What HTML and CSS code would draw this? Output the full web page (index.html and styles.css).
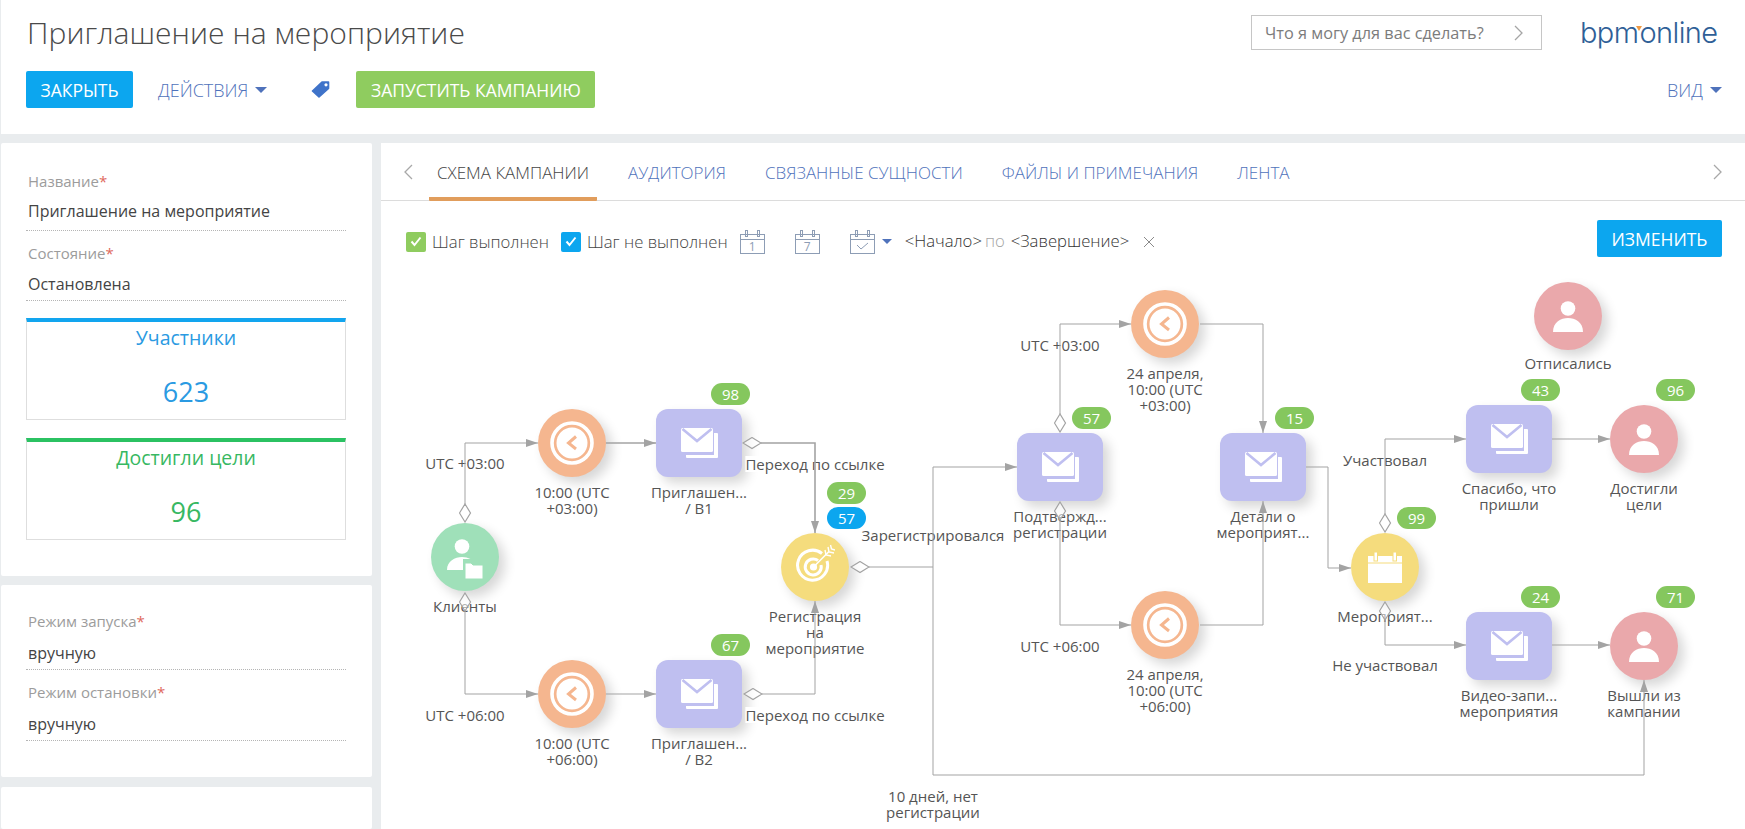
FILE: index.html
```html
<!DOCTYPE html>
<html lang="ru">
<head>
<meta charset="utf-8">
<title>Приглашение на мероприятие</title>
<link rel="stylesheet" href="styles.css">
</head>
<body>
<svg class="defs" width="0" height="0" aria-hidden="true">
  <defs>
    <symbol id="i-clock" viewBox="0 0 44 44">
      <circle cx="22" cy="22" r="20" fill="none" stroke="#fff" stroke-width="3.6"/>
      <circle cx="22" cy="22" r="15.5" fill="#fff"/>
      <path d="M26 15.5 L18.5 22 L26 28" fill="none" stroke="#f5b68f" stroke-width="3"/>
    </symbol>
    <symbol id="i-mail" viewBox="0 0 37 30">
      <path d="M33 5h3a1 1 0 0 1 1 1v23a1 1 0 0 1-1 1H6a1 1 0 0 1-1-1v-2h28z" fill="#fff"/>
      <rect width="32" height="24" rx="1.5" fill="#fff"/>
      <path d="M1.5 1 L16 13 L30.500 1" fill="none" stroke="#bfbff0" stroke-width="2.6"/>
    </symbol>
    <symbol id="i-person" viewBox="0 0 30 31">
      <circle cx="15" cy="7.500" r="7.300"/>
      <path d="M0 31C0 21 8 17 15 17s15 4 15 14z"/>
    </symbol>
    <symbol id="i-clients" viewBox="0 0 36 40">
      <circle cx="15" cy="7.500" r="7.300"/>
      <path d="M0 31C0 22 8 18 15 18c3 0 6 .7 8.500 2H16v11z"/>
      <path d="M18 24h6l2 2h10v14H18z" stroke="#9fe0b9" stroke-width="1"/>
    </symbol>
    <symbol id="i-target" viewBox="0 0 40 40">
      <g fill="none" stroke="#fff" stroke-width="3">
        <path d="M27 9.500A15 15 0 1 0 32 17"/>
        <path d="M23 16.500A8 8 0 1 0 26 21"/>
      </g>
      <circle cx="18.500" cy="23" r="3.600" fill="#fff"/>
      <path d="M18.500 23 L34 7.500" stroke="#fff" stroke-width="1.600"/>
      <path d="M30 6l1 5 5 1M33 3l1 5 5 1M35.500 1l1 4 3.500 1" fill="none" stroke="#fff" stroke-width="1.400"/>
    </symbol>
    <symbol id="i-event" viewBox="0 0 34 31">
      <rect x="0" y="4" width="34" height="27" fill="#fff"/>
      <path d="M0 11h34" stroke="#f5dc7d" stroke-width="1.200"/>
      <rect x="6" y="0" width="3.500" height="9" fill="#fff" stroke="#f5dc7d" stroke-width="1"/>
      <rect x="25" y="0" width="3.500" height="9" fill="#fff" stroke="#f5dc7d" stroke-width="1"/>
    </symbol>
    <symbol id="i-cal" viewBox="0 0 25 24">
      <g fill="none" stroke="#8d9db5" stroke-width="1">
        <rect x=".5" y="4.500" width="24" height="19"/>
        <path d="M.5 9.500h24"/>
        <rect x="5.500" y=".5" width="2" height="6"/>
        <rect x="17.500" y=".5" width="2" height="6"/>
      </g>
    </symbol>
    <marker id="arrow" markerUnits="userSpaceOnUse" markerWidth="13" markerHeight="9" refX="12" refY="4.500" orient="auto">
      <path d="M0 .5L12 4.500L0 8.500z" fill="#a3a3a3"/>
    </marker>
    <marker id="diamond" markerUnits="userSpaceOnUse" markerWidth="20" markerHeight="13" refX="19" refY="6.500" orient="auto">
      <path d="M1 6.500L10 1L19 6.500L10 12z" fill="#fff" fill-opacity=".55" stroke="#a3a3a3" stroke-width="1.200"/>
    </marker>
  </defs>
</svg>

<div class="app">
  <header class="header">
    <div class="header-top">
      <h1 class="title">Приглашение на мероприятие</h1>
      <div class="search">
        <span class="search-text">Что я могу для вас сделать?</span>
        <svg class="chev" width="9" height="16" viewBox="0 0 9 16"><path d="M1 1l7 7-7 7"/></svg>
      </div>
      <div class="logo">bpm<span class="logo-mark"></span>online</div>
    </div>
    <div class="toolbar">
      <button class="btn btn-blue btn-close">ЗАКРЫТЬ</button>
      <span class="link link-actions">ДЕЙСТВИЯ<i class="caret"></i></span>
      <svg class="tag" width="19" height="17" viewBox="0 0 19 17">
        <path d="M11 1h6.500v6.500L8 16 1.500 10z" fill="#3f73c9" stroke="#3f73c9" stroke-width="1.600" stroke-linejoin="round"/>
        <circle cx="15" cy="3.800" r="1.600" fill="#fff"/>
      </svg>
      <button class="btn btn-green">ЗАПУСТИТЬ КАМПАНИЮ</button>
      <span class="link link-view">ВИД<i class="caret"></i></span>
    </div>
  </header>

  <main class="main">
    <aside class="side">
      <section class="panel panel-primary">
        <div class="field field-tall">
          <div class="field-label">Название<b>*</b></div>
          <div class="field-value">Приглашение на мероприятие</div>
        </div>
        <div class="field field-state">
          <div class="field-label">Состояние<b>*</b></div>
          <div class="field-value">Остановлена</div>
        </div>
        <div class="metric metric-blue">
          <div class="metric-title">Участники</div>
          <div class="metric-value">623</div>
        </div>
        <div class="metric metric-green">
          <div class="metric-title">Достигли цели</div>
          <div class="metric-value">96</div>
        </div>
      </section>
      <section class="panel panel-modes">
        <div class="field">
          <div class="field-label">Режим запуска<b>*</b></div>
          <div class="field-value">вручную</div>
        </div>
        <div class="field">
          <div class="field-label">Режим остановки<b>*</b></div>
          <div class="field-value">вручную</div>
        </div>
      </section>
      <section class="panel panel-rest"></section>
    </aside>

    <section class="content">
      <nav class="tabs">
        <svg class="tab-chev" width="9" height="16" viewBox="0 0 9 16"><path d="M8 1L1 8l7 7"/></svg>
        <span class="tab tab-active">СХЕМА КАМПАНИИ</span>
        <span class="tab">АУДИТОРИЯ</span>
        <span class="tab">СВЯЗАННЫЕ СУЩНОСТИ</span>
        <span class="tab">ФАЙЛЫ И ПРИМЕЧАНИЯ</span>
        <span class="tab">ЛЕНТА</span>
        <svg class="tab-chev tab-chev-right" width="9" height="16" viewBox="0 0 9 16"><path d="M1 1l7 7-7 7"/></svg>
      </nav>

      <div class="filterbar">
        <div class="filters">
          <span class="check check-green"><svg width="12" height="11" viewBox="0 0 12 11"><path d="M1.500 5.500L4.500 9 10.500 1.500"/></svg></span>
          <span class="check-text">Шаг выполнен</span>
          <span class="check check-blue"><svg width="12" height="11" viewBox="0 0 12 11"><path d="M1.500 5.500L4.500 9 10.500 1.500"/></svg></span>
          <span class="check-text">Шаг не выполнен</span>
          <span class="cal cal-first"><svg width="25" height="24"><use href="#i-cal"/></svg><em>1</em></span>
          <span class="cal"><svg width="25" height="24"><use href="#i-cal"/></svg><em>7</em></span>
          <span class="cal"><svg width="25" height="24"><use href="#i-cal"/></svg><svg class="cal-tick" width="13" height="8" viewBox="0 0 13 8"><path d="M1 3l4 4 7-6"/></svg></span>
          <i class="caret caret-cal"></i>
          <span class="date">&lt;Начало&gt;</span>
          <span class="date-by">по</span>
          <span class="date">&lt;Завершение&gt;</span>
          <svg class="clear" width="12" height="12" viewBox="0 0 12 12"><path d="M1 1l10 10M11 1L1 11"/></svg>
        </div>
        <button class="btn btn-blue btn-edit">ИЗМЕНИТЬ</button>
      </div>

      <div class="canvas">
        <div class="node n-clients"><div class="shape circle green"><svg class="ic-clients" width="36" height="40"><use href="#i-clients"/></svg></div><div class="caption">Клиенты</div></div>
        <div class="node n-clock1"><div class="shape circle orange"><svg width="44" height="44"><use href="#i-clock"/></svg></div><div class="caption">10:00 (UTC<br>+03:00)</div></div>
        <div class="node n-mail1"><div class="shape tile"><svg width="37" height="30"><use href="#i-mail"/></svg></div><span class="badge">98</span><div class="caption">Приглашен...<br>/ B1</div></div>
        <div class="node n-clock2"><div class="shape circle orange"><svg width="44" height="44"><use href="#i-clock"/></svg></div><div class="caption">10:00 (UTC<br>+06:00)</div></div>
        <div class="node n-mail2"><div class="shape tile"><svg width="37" height="30"><use href="#i-mail"/></svg></div><span class="badge">67</span><div class="caption">Приглашен...<br>/ B2</div></div>
        <div class="node n-target"><div class="shape circle yellow"><svg class="ic-target" width="40" height="40"><use href="#i-target"/></svg></div><span class="badge badge-up">29</span><span class="badge badge-blue">57</span><div class="caption">Регистрация<br>на<br>мероприятие</div></div>
        <div class="node n-confirm"><div class="shape tile"><svg width="37" height="30"><use href="#i-mail"/></svg></div><span class="badge">57</span><div class="caption">Подтвержд...<br>регистрации</div></div>
        <div class="node n-clock3"><div class="shape circle orange"><svg width="44" height="44"><use href="#i-clock"/></svg></div><div class="caption">24 апреля,<br>10:00 (UTC<br>+03:00)</div></div>
        <div class="node n-details"><div class="shape tile"><svg width="37" height="30"><use href="#i-mail"/></svg></div><span class="badge">15</span><div class="caption">Детали о<br>мероприят...</div></div>
        <div class="node n-clock4"><div class="shape circle orange"><svg width="44" height="44"><use href="#i-clock"/></svg></div><div class="caption">24 апреля,<br>10:00 (UTC<br>+06:00)</div></div>
        <div class="node n-event"><div class="shape circle yellow"><svg width="34" height="31"><use href="#i-event"/></svg></div><span class="badge">99</span><div class="caption">Мероприят...</div></div>
        <div class="node n-thanks"><div class="shape tile"><svg width="37" height="30"><use href="#i-mail"/></svg></div><span class="badge">43</span><div class="caption">Спасибо, что<br>пришли</div></div>
        <div class="node n-achieved"><div class="shape circle pink"><svg class="ic-person" width="30" height="31"><use href="#i-person"/></svg></div><span class="badge">96</span><div class="caption">Достигли<br>цели</div></div>
        <div class="node n-video"><div class="shape tile"><svg width="37" height="30"><use href="#i-mail"/></svg></div><span class="badge">24</span><div class="caption">Видео-запи...<br>мероприятия</div></div>
        <div class="node n-exit"><div class="shape circle pink"><svg class="ic-person" width="30" height="31"><use href="#i-person"/></svg></div><span class="badge">71</span><div class="caption">Вышли из<br>кампании</div></div>
        <div class="node n-unsub"><div class="shape circle pink"><svg class="ic-person" width="30" height="31"><use href="#i-person"/></svg></div><div class="caption caption-unsub">Отписались</div></div>

        <span class="edge-label l-utc3a">UTC +03:00</span>
        <span class="edge-label l-utc6a">UTC +06:00</span>
        <span class="edge-label l-link1">Переход по ссылке</span>
        <span class="edge-label l-link2">Переход по ссылке</span>
        <span class="edge-label l-reg">Зарегистрировался</span>
        <span class="edge-label l-utc3b">UTC +03:00</span>
        <span class="edge-label l-utc6b">UTC +06:00</span>
        <span class="edge-label l-yes">Участвовал</span>
        <span class="edge-label l-no">Не участвовал</span>
        <span class="edge-label l-days">10 дней, нет<br>регистрации</span>

        <svg class="edges" width="1364" height="572" viewBox="381 257 1364 572">
          <path class="e" d="M465 504V443H538"/>
          <path class="e4 thick" d="M606 443H656"/>
          <path class="e thick" d="M761 443H815V533"/>
          <path class="e" d="M465 611V694H538"/>
          <path class="e4" d="M606 694H656"/>
          <path class="e" d="M762 694H815V601"/>
          <path class="e3" d="M869 567H933"/>
          <path class="e4" d="M933 567V467H1017"/>
          <path class="e4" d="M933 567V775H1644V680"/>
          <path class="e" d="M1060 414V324H1131"/>
          <path class="e4" d="M1200 324H1263V433"/>
          <path class="e" d="M1060 520V625H1131"/>
          <path class="e4" d="M1200 625H1263V501"/>
          <path class="e4" d="M1306 467H1328V568H1351"/>
          <path class="e" d="M1385 514V439H1466"/>
          <path class="e4" d="M1552 439H1610"/>
          <path class="e" d="M1385 620V645H1466"/>
          <path class="e4" d="M1552 645H1610"/>
        </svg>
      </div>
    </section>
  </main>
</div>
</body>
</html>
```

FILE: styles.css
```css
* { box-sizing: border-box; }
html, body { margin: 0; padding: 0; height: 100%; overflow: hidden; }
body { background: #e9ecee; font-family: "Open Sans", "Liberation Sans", sans-serif; color: #444; }
.defs { position: absolute; }

.app { height: 829px; padding-left: 1px; display: flex; flex-direction: column; gap: 9px; }

/* header */
.header { flex: none; height: 134px; background: #fff; padding: 15px 23px 0 25px; }
.header-top { display: flex; height: 35px; align-items: center; }
.title { margin: 0 auto 0 0; padding-left: 1px; font-size: 30px; font-weight: 300; letter-spacing: .05px; color: #4a4a4a; line-height: 35px; white-space: nowrap; }
.search { width: 291px; height: 35px; border: 1px solid #c6c6c6; display: flex; align-items: center; justify-content: space-between; padding: 0 18px 0 13px; margin-right: 38px; }
.search-text { font-size: 16.300px; color: #7c7c7c; white-space: nowrap; }
.chev { fill: none; stroke: #a5a5a5; stroke-width: 1.300; }
.logo { display: flex; align-items: baseline; width: 139px; margin-right: 3px; font-family: Inter, "Liberation Sans", sans-serif; font-size: 29px; font-weight: 300; letter-spacing: -.6px; color: #2f5f97; line-height: 37px; }
.logo-mark { width: 0; height: 0; align-self: center; margin: -9px -3px 0 -2px; border-left: 3px solid transparent; border-right: 3px solid transparent; border-top: 5px solid #ef9a45; }

.toolbar { display: flex; align-items: center; height: 37px; margin-top: 21px; }
.btn { border: 0; border-radius: 2px; color: #fff; font-family: inherit; font-size: 17.500px; height: 37px; padding: 0; white-space: nowrap; }
.btn-blue { background: #0ca6ef; }
.btn-green { background: #8fcc5f; width: 239px; margin-left: 26px; }
.btn-close { width: 107px; }
.btn-edit { width: 125px; }
.link { color: #4f72bb; font-size: 18px; font-weight: 300; display: inline-flex; align-items: center; white-space: nowrap; }
.link-actions { margin-left: 25px; }
.link-view { margin-left: auto; }
.tag { margin-left: 44px; }
.caret { display: inline-block; width: 0; height: 0; margin-left: 7px; border-left: 6px solid transparent; border-right: 6px solid transparent; border-top: 6px solid #4f72bb; }

/* main */
.main { flex: 1; min-height: 0; display: grid; grid-template-columns: 371px 1fr; gap: 9px; }
.side { display: flex; flex-direction: column; }
.panel { background: #fff; border-radius: 2px; padding-left: 25px; padding-right: 26px; }
.panel-primary { height: 433px; padding-top: 28px; }
.panel-modes { height: 192px; padding-top: 26px; margin-top: 9px; }
.panel-rest { flex: 1; margin-top: 10px; }

.field { border-bottom: 1px dotted #b5b5b5; padding: 0 2px 1px; margin-bottom: 12px; }
.field-tall { padding-bottom: 4px; }
.field-label { font-size: 15px; line-height: 20px; color: #9c9c9c; }
.field-label b { font-weight: 400; color: #e0695c; }
.field-value { font-size: 16px; line-height: 30px; margin-top: 7px; color: #444; white-space: nowrap; }
.field-tall .field-value { margin-top: 5px; }
.field-state { margin-bottom: 17px; }
.field-state .field-value { margin-top: 6px; }

.metric { height: 102px; border: 1px solid #dedede; border-top: 4px solid; margin-bottom: 18px; text-align: center; }
.metric-blue { border-top-color: #12a5ef; color: #2a9ae2; }
.metric-green { border-top-color: #2bc262; color: #37b862; }
.metric-title { font-size: 19.500px; line-height: 32px; }
.metric-value { font-size: 27px; line-height: 40px; margin-top: 18px; }

/* right side */
.content { background: #fff; display: flex; flex-direction: column; min-width: 0; }
.tabs { flex: none; height: 58px; border-bottom: 1px solid #dcdcdc; display: flex; align-items: stretch; gap: 23px; padding-left: 23px; padding-right: 23px; }
.tab { display: flex; align-items: center; padding: 0 8px; font-size: 17px; font-weight: 300; color: #4f72bb; white-space: nowrap; margin-bottom: -1px; }
.tab-active { color: #444; border-bottom: 4px solid #e19d5c; padding-top: 4px; border-radius: 0 0 1px 1px; }
.tab-chev { align-self: center; fill: none; stroke: #a8a8a8; stroke-width: 1.300; margin-right: -7px; }
.tab-chev-right { margin: 0 0 0 auto; }

.filterbar { flex: none; display: flex; align-items: flex-start; justify-content: space-between; padding: 19px 23px 0 25px; height: 56px; }
.filters { display: flex; align-items: center; height: 37px; margin-top: 3px; }
.check { width: 20px; height: 20px; border-radius: 2px; display: flex; align-items: center; justify-content: center; }
.check svg { fill: none; stroke: #fff; stroke-width: 2; }
.check-green { background: #8fcc5f; }
.check-blue { background: #0ca6ef; }
.check-text { font-size: 16.700px; font-weight: 300; margin-left: 6px; margin-right: 12px; white-space: nowrap; }
.cal { position: relative; width: 25px; height: 24px; margin-left: 30px; display: block; }
.cal-first { margin-left: 0; }
.cal > svg:first-child { display: block; }
.cal em { position: absolute; left: 0; right: 0; top: 9px; text-align: center; font-style: normal; font-size: 12px; line-height: 15px; color: #8d9db5; }
.cal-tick { position: absolute; left: 6px; top: 12px; fill: none; stroke: #8d9db5; stroke-width: 1; }
.caret-cal { margin-left: 7px; border-left-width: 5px; border-right-width: 5px; border-top-width: 5px; }
.date { font-size: 16.700px; font-weight: 300; margin-left: 13px; color: #333; white-space: nowrap; margin-top: -3px; }
.date-by { font-size: 16.700px; font-weight: 300; color: #a5a5a5; margin-left: 3px; margin-right: -7px; margin-top: -3px; }
.clear { margin-left: 14px; fill: none; stroke: #8a8a8a; stroke-width: 1; }

/* diagram: a free canvas, offset from page by (381, 257) */
.canvas { position: relative; flex: 1; overflow: hidden; }
.edges { position: absolute; left: 0; top: 0; z-index: 3; }
.edges path { fill: none; stroke: #a3a3a3; stroke-width: 1; }
.edges .thick { stroke-width: 1.600; }
.e { marker-start: url(#diamond); marker-end: url(#arrow); }
.e3 { marker-start: url(#diamond); }
.e4 { marker-end: url(#arrow); }

.node { position: absolute; width: 86px; margin-left: 17px; display: flex; flex-direction: column; align-items: center; z-index: 1; }
.shape { flex: none; height: 68px; display: flex; align-items: center; justify-content: center; box-shadow: 6px 6px 12px rgba(0, 0, 0, .16); }
.circle { width: 68px; border-radius: 50%; }
.tile { width: 86px; border-radius: 12px; background: #bfbff0; }
.orange { background: #f5b68f; }
.green { background: #9fe0b9; }
.yellow { background: #f5dc7d; }
.pink { background: #eaa8ab; }
.ic-person { fill: #fff; }
.ic-clients { fill: #fff; margin-top: 4px; }
.ic-target { margin-top: -6px; }
.caption { margin-top: 7px; font-size: 15px; line-height: 16px; color: #555; text-align: center; white-space: nowrap; }
.caption-unsub { margin-top: 5px; }
.badge { position: absolute; left: 55px; top: -26px; width: 39px; height: 22px; border-radius: 11px; background: #85c75e; color: #fff; font-size: 15px; line-height: 22px; text-align: center; }
.badge-up { top: -51px; }
.badge-blue { background: #0ca6ef; }

.n-clients { left: 24px; top: 266px; }
.n-clock1 { left: 131px; top: 152px; }
.n-mail1 { left: 258px; top: 152px; }
.n-clock2 { left: 131px; top: 403px; }
.n-mail2 { left: 258px; top: 403px; }
.n-target { left: 374px; top: 276px; }
.n-confirm { left: 619px; top: 176px; }
.n-clock3 { left: 724px; top: 33px; }
.n-details { left: 822px; top: 176px; }
.n-clock4 { left: 724px; top: 334px; }
.n-event { left: 944px; top: 276px; }
.n-thanks { left: 1068px; top: 148px; }
.n-achieved { left: 1203px; top: 148px; }
.n-video { left: 1068px; top: 355px; }
.n-exit { left: 1203px; top: 355px; }
.n-unsub { left: 1127px; top: 25px; }

.edge-label { position: absolute; z-index: 2; transform: translate(-50%, -50%); background: #fff; font-size: 15px; line-height: 16px; color: #555; text-align: center; white-space: nowrap; }
.l-utc3a { left: 84px; top: 206px; }
.l-utc6a { left: 84px; top: 458px; }
.l-link1 { left: 434px; top: 207px; }
.l-link2 { left: 434px; top: 458px; }
.l-reg { left: 552px; top: 278px; }
.l-utc3b { left: 679px; top: 88px; }
.l-utc6b { left: 679px; top: 389px; }
.l-yes { left: 1004px; top: 203px; }
.l-no { left: 1004px; top: 408px; }
.l-days { left: 552px; top: 547px; }
```
